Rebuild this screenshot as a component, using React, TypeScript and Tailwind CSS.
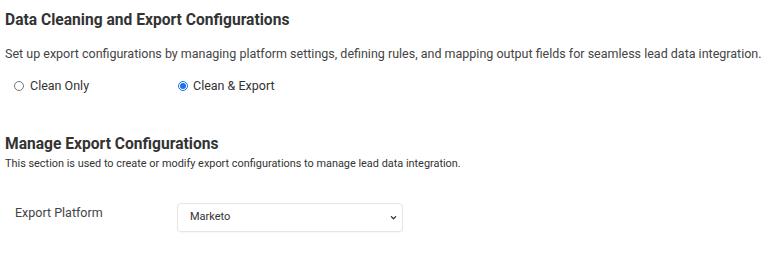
import React, { useState } from "react";

const platforms = ["Marketo", "HubSpot", "Salesforce", "Eloqua", "Pardot"];

const App: React.FC = () => {
  const [mode, setMode] = useState("export");
  const [platform, setPlatform] = useState("Marketo");

  return (
    <div className="min-h-screen bg-white px-[5px] pt-[8px] font-['Roboto',sans-serif] text-[#333]">
      <h1 className="text-[15.6px] font-bold leading-[24px] text-[#333]">
        Data Cleaning and Export Configurations
      </h1>
      <p className="mt-[13px] text-[12.5px] leading-[18px] text-[#444]">
        Set up export configurations by managing platform settings, defining rules, and mapping output fields for seamless lead data integration.
      </p>

      <div className="mt-[14px] flex items-center pl-[9px] text-[12.5px] leading-[18px] text-[#333]">
        <label className="flex w-[164px] items-center gap-[6px]">
          <input
            type="radio"
            name="mode"
            checked={mode === "clean"}
            onChange={() => setMode("clean")}
            className="m-0 h-[10px] w-[10px] accent-[#1a73e8]"
          />
          Clean Only
        </label>
        <label className="flex items-center gap-[5px]">
          <input
            type="radio"
            name="mode"
            checked={mode === "export"}
            onChange={() => setMode("export")}
            className="m-0 h-[10px] w-[10px] accent-[#1a73e8]"
          />
          Clean &amp; Export
        </label>
      </div>

      <h2 className="mt-[37px] text-[15.6px] font-bold leading-[24px] text-[#333]">
        Manage Export Configurations
      </h2>
      <p className="text-[10.9px] leading-[16px] text-[#333]">
        This section is used to create or modify export configurations to manage lead data integration.
      </p>

      <div className="mt-[31px] flex items-start pl-[10px]">
        <label className="mt-[1px] w-[162px] text-[12.5px] leading-[18px] text-[#444]">Export Platform</label>
        <div className="relative w-[226px]">
          <select
            value={platform}
            onChange={(event) => setPlatform(event.target.value)}
            className="h-[29px] w-full appearance-none rounded-[4px] border border-[#e6e6e6] bg-white pl-[12px] text-[11px] text-[#333] shadow-[0_1px_2px_rgba(0,0,0,0.04)] outline-none"
          >
            {platforms.map((option) => (
              <option key={option} value={option}>
                {option}
              </option>
            ))}
          </select>
          <svg
            viewBox="0 0 16 16"
            className="pointer-events-none absolute right-[6px] top-[11px] h-[7px] w-[7px] text-[#333]"
            fill="none"
            stroke="currentColor"
            strokeWidth="3"
            strokeLinecap="round"
            strokeLinejoin="round"
          >
            <path d="M3 6l5 5 5-5" />
          </svg>
        </div>
      </div>
    </div>
  );
};

export default App;
